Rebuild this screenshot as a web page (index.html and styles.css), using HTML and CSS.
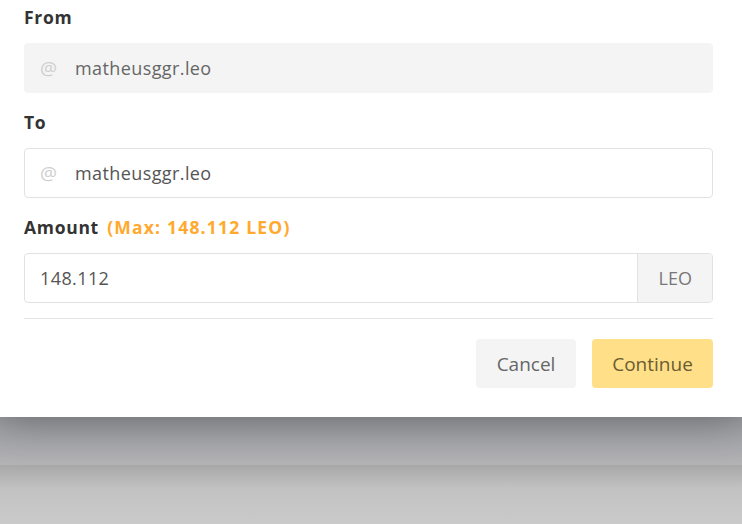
FILE: index.html
```html
<!DOCTYPE html>
<html lang="en">
<head>
    <meta charset="UTF-8">
    <meta name="viewport" content="width=device-width, initial-scale=1.0">
    <title>Transfer</title>
    <link rel="stylesheet" href="styles.css">
</head>
<body>
    <div class="page">
        <!-- Transfer dialog -->
        <div class="modal">
            <div class="field">
                <label class="field-label">From</label>
                <div class="input input-disabled">
                    <span class="input-icon">@</span>
                    <span class="input-value">matheusggr.leo</span>
                </div>
            </div>

            <div class="field">
                <label class="field-label">To</label>
                <div class="input">
                    <span class="input-icon">@</span>
                    <span class="input-value">matheusggr.leo</span>
                </div>
            </div>

            <div class="field">
                <label class="field-label">Amount <span class="max-note">(Max: 148.112 LEO)</span></label>
                <div class="input input-group">
                    <span class="input-value">148.112</span>
                    <span class="input-addon">LEO</span>
                </div>
            </div>

            <hr class="divider">

            <div class="actions">
                <button class="btn btn-cancel">Cancel</button>
                <button class="btn btn-continue">Continue</button>
            </div>
        </div>

        <!-- Page behind the backdrop -->
        <div class="backdrop-top"></div>
        <div class="backdrop-bottom"></div>
    </div>
</body>
</html>
```

FILE: styles.css
```css
body {
    margin: 0;
    font-family: 'Open Sans', 'Noto Sans', Arial, sans-serif;
    color: #333;
    background-color: #c9c9c9;
    overflow: hidden;
}

.page {
    height: 524px;
    display: flex;
    flex-direction: column;
}

.modal {
    position: relative;
    z-index: 1;
    height: 417px;
    box-sizing: border-box;
    padding: 4px 29px 0 24px;
    background-color: white;
    box-shadow: 0 4px 40px rgba(0, 0, 0, 0.3);
}

.field {
    margin-bottom: 16px;
}

.field-label {
    display: block;
    font-size: 17.5px;
    font-weight: 700;
    line-height: 26px;
    letter-spacing: 0.7px;
    margin-bottom: 13px;
    color: #333;
}

.max-note {
    margin-left: 3px;
    letter-spacing: 1.2px;
    color: #ffa92e;
}

.input {
    display: flex;
    align-items: center;
    height: 50px;
    box-sizing: border-box;
    border: 1px solid #e2e2e2;
    border-radius: 4px;
    padding: 0 15px;
    font-size: 18px;
    letter-spacing: 0.4px;
    color: #555;
}

.input-disabled {
    background-color: #f4f4f4;
    border-color: #f4f4f4;
    color: #666;
}

.input-icon {
    width: 35px;
    color: #cfcfcf;
    font-size: 19px;
    letter-spacing: 0;
}

.input-group {
    padding-right: 0;
    overflow: hidden;
}

.input-group .input-value {
    flex: 1;
}

.input-addon {
    align-self: stretch;
    display: flex;
    align-items: center;
    padding: 0 20px 0 21px;
    background-color: #f4f4f4;
    border-left: 1px solid #e2e2e2;
    letter-spacing: 0;
    color: #777;
}

.divider {
    border: none;
    border-top: 1px solid #e5e5e5;
    margin: -1px 0 20px 0;
}

.actions {
    display: flex;
    justify-content: flex-end;
    gap: 16px;
}

.btn {
    height: 49px;
    border: none;
    border-radius: 4px;
    font-family: inherit;
    font-size: 19px;
    padding: 0;
}

.btn-cancel {
    width: 100px;
    background-color: #f4f4f4;
    color: #666;
}

.btn-continue {
    width: 121px;
    background-color: #ffdf87;
    color: #6b5c33;
}

.backdrop-top {
    height: 48px;
    background: linear-gradient(#9a9ba0, #b4b4b7);
}

.backdrop-bottom {
    flex: 1;
    background: linear-gradient(#a8a8a8, #c2c2c2 40%, #cacaca);
}
```
